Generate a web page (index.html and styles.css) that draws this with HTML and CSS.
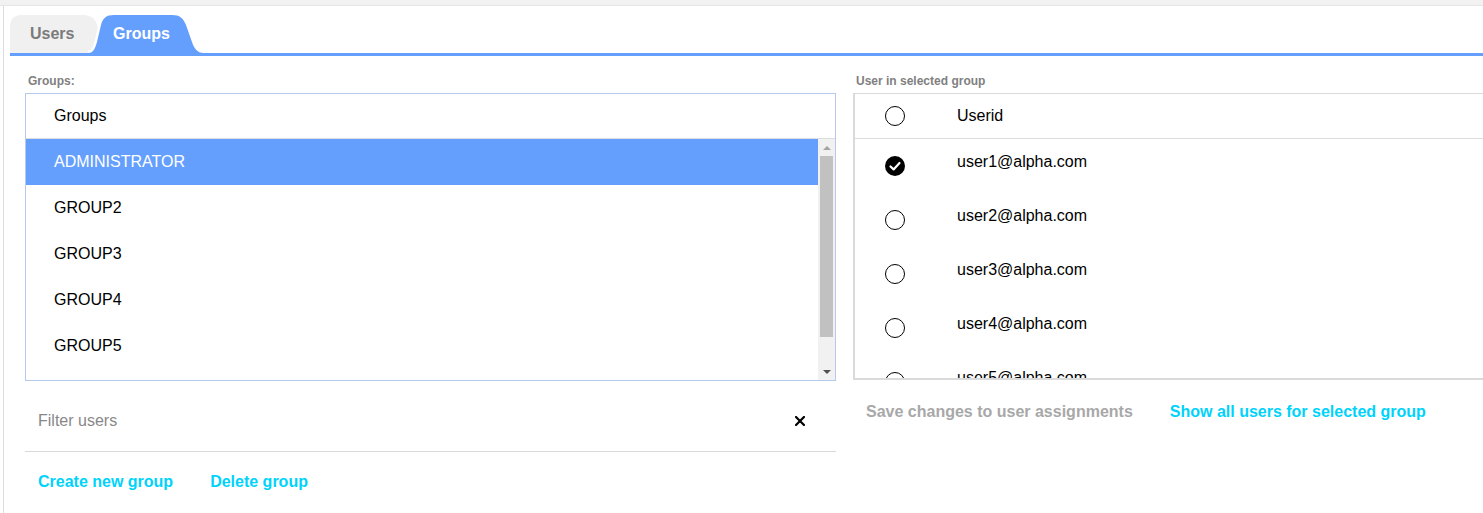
FILE: index.html
```html
<!DOCTYPE html>
<html>
<head>
<meta charset="utf-8">
<link rel="stylesheet" href="styles.css">
</head>
<body>
<div class="topbar"></div>
<div class="page">
  <div class="tabs">
    <div class="tab tab-users">
      <svg class="tab-shape" width="92" height="38" viewBox="0 0 92 38"><path d="M0,38 V12 Q0,0 12,0 H74 Q84,0 87,10 L92,38 Z" fill="#f0f0f0"/></svg>
      <span class="tab-label">Users</span>
    </div>
    <div class="tab tab-groups">
      <svg class="tab-shape" width="122" height="38" viewBox="-3 0 122 38"><path d="M0,38 C6,38 7,33 9,27 L13,10 C15,3 18,0 26,0" fill="none" stroke="#ffffff" stroke-width="5"/><path d="M0,38 C6,38 7,33 9,27 L13,10 C15,3 18,0 26,0 H84 C92,0 95,3 98,10 L104,27 C106,33 109,38 116,38 Z" fill="#659ffe"/></svg>
      <span class="tab-label">Groups</span>
    </div>
  </div>

  <div class="content">
    <div class="col col-left">
      <div class="label">Groups:</div>
      <div class="listbox">
        <div class="list-header">Groups</div>
        <div class="list-body">
          <div class="rows">
            <div class="row selected">ADMINISTRATOR</div>
            <div class="row">GROUP2</div>
            <div class="row">GROUP3</div>
            <div class="row">GROUP4</div>
            <div class="row">GROUP5</div>
            <div class="row">GROUP6</div>
          </div>
          <div class="scrollbar">
            <div class="sb-btn"><span class="arrow-up"></span></div>
            <div class="sb-track"><div class="sb-thumb"></div></div>
            <div class="sb-btn"><span class="arrow-down"></span></div>
          </div>
        </div>
      </div>
      <div class="filter">
        <span class="placeholder">Filter users</span>
        <svg class="clear" width="10" height="10" viewBox="0 0 10 10"><path d="M1,1 L9,9 M9,1 L1,9" stroke="#000" stroke-width="2.2" stroke-linecap="square"/></svg>
      </div>
      <div class="actions">
        <span class="link">Create new group</span>
        <span class="link">Delete group</span>
      </div>
    </div>

    <div class="col col-right">
      <div class="label">User in selected group</div>
      <div class="userbox">
        <div class="user-header">
          <span class="radio"></span>
          <span class="user-text">Userid</span>
        </div>
        <div class="user-body">
          <div class="user-row">
            <span class="radio checked"><svg width="20" height="20" viewBox="0 0 20 20"><circle cx="10" cy="10" r="10" fill="#000"/><path d="M5.5,10.5 L8.6,13.4 L14.5,7" fill="none" stroke="#fff" stroke-width="2.2" stroke-linecap="round" stroke-linejoin="round"/></svg></span>
            <span class="user-text">user1@alpha.com</span>
          </div>
          <div class="user-row">
            <span class="radio"></span>
            <span class="user-text">user2@alpha.com</span>
          </div>
          <div class="user-row">
            <span class="radio"></span>
            <span class="user-text">user3@alpha.com</span>
          </div>
          <div class="user-row">
            <span class="radio"></span>
            <span class="user-text">user4@alpha.com</span>
          </div>
          <div class="user-row">
            <span class="radio"></span>
            <span class="user-text">user5@alpha.com</span>
          </div>
        </div>
      </div>
      <div class="actions actions-right">
        <span class="link disabled">Save changes to user assignments</span>
        <span class="link">Show all users for selected group</span>
      </div>
    </div>
  </div>
</div>
</body>
</html>
```

FILE: styles.css
```css
html, body {
  margin: 0;
  padding: 0;
  background: #ffffff;
  width: 1483px;
  height: 513px;
  overflow: hidden;
  font-family: "Liberation Sans", Arial, sans-serif;
  color: #000;
}

.topbar {
  height: 5px;
  background: #f2f2f2;
  border-bottom: 1px solid #e6e6e6;
}

.page {
  margin-left: 3px;
  border-left: 1px solid #dedede;
  height: 507px;
  padding-top: 9px;
  box-sizing: border-box;
}

.tabs {
  margin-left: 6px;
  height: 38px;
  border-bottom: 3px solid #659ffe;
  display: flex;
  align-items: stretch;
}

.tab {
  position: relative;
  height: 38px;
  display: flex;
  align-items: center;
  font-weight: bold;
  font-size: 16px;
}

.tab-shape {
  position: absolute;
  left: 0;
  top: 0;
}

.tab-label {
  position: relative;
}

.tab-users {
  width: 92px;
  padding-left: 20px;
  box-sizing: border-box;
  color: #7b7b7b;
}

.tab-groups {
  width: 122px;
  margin-left: -17px;
  padding-left: 28px;
  box-sizing: border-box;
  color: #ffffff;
}

.content {
  display: flex;
  gap: 17px;
  padding-left: 21px;
  padding-top: 19px;
}

.col-left {
  width: 811px;
  flex: none;
}

.col-right {
  width: 680px;
  flex: none;
}

.label {
  font-size: 12px;
  font-weight: bold;
  color: #808080;
  line-height: 13px;
  height: 13px;
  margin-bottom: 5px;
  padding-left: 3px;
}

.listbox {
  border: 1px solid #b5c8ee;
}

.list-header {
  height: 44px;
  border-bottom: 1px solid #dddddd;
  display: flex;
  align-items: center;
  padding-left: 28px;
  font-size: 16px;
}

.list-body {
  height: 241px;
  display: flex;
  overflow: hidden;
}

.rows {
  flex: 1;
}

.row {
  height: 46px;
  display: flex;
  align-items: center;
  padding-left: 28px;
  font-size: 16px;
}

.row.selected {
  background: #659ffe;
  color: #ffffff;
}

.scrollbar {
  width: 17px;
  flex: none;
  background: #f1f1f1;
  display: flex;
  flex-direction: column;
}

.sb-btn {
  height: 17px;
  display: flex;
  align-items: center;
  justify-content: center;
  flex: none;
}

.arrow-up {
  width: 0;
  height: 0;
  border-left: 4px solid transparent;
  border-right: 4px solid transparent;
  border-bottom: 4px solid #a3a3a3;
}

.arrow-down {
  width: 0;
  height: 0;
  border-left: 4px solid transparent;
  border-right: 4px solid transparent;
  border-top: 4px solid #505050;
}

.sb-track {
  flex: 1;
  padding: 0 2px;
}

.sb-thumb {
  height: 181px;
  background: #c1c1c1;
}

.filter {
  height: 71px;
  padding-top: 9px;
  box-sizing: border-box;
  border-bottom: 1px solid #d9d9d9;
  display: flex;
  align-items: center;
  justify-content: space-between;
  padding-left: 13px;
  padding-right: 31px;
}

.placeholder {
  font-size: 16px;
  color: #888888;
}

.actions {
  display: flex;
  gap: 37px;
  padding-left: 13px;
  margin-top: 21px;
  line-height: 18px;
}

.actions-right {
  margin-top: 23px;
  gap: 37px;
}

.link {
  font-size: 16px;
  font-weight: bold;
  color: #00d3fb;
}

.link.disabled {
  color: #a8a8a8;
}

.userbox {
  border: 2px solid #dadada;
  border-top-width: 1px;
  border-right: none;
  height: 287px;
  box-sizing: border-box;
  overflow: hidden;
}

.user-header {
  height: 44px;
  border-bottom: 1px solid #dddddd;
  display: flex;
  align-items: center;
  padding-left: 30px;
  gap: 52px;
}

.user-body {
  height: 240px;
  overflow: hidden;
}

.user-row {
  height: 54px;
  display: flex;
  align-items: flex-start;
  padding-left: 30px;
  gap: 52px;
}

.user-row .radio {
  margin-top: 17px;
}

.user-row .user-text {
  padding-top: 14px;
}

.radio {
  width: 20px;
  height: 20px;
  box-sizing: border-box;
  border: 1.5px solid #000;
  border-radius: 50%;
  flex: none;
  display: block;
}

.radio.checked {
  border: none;
}

.radio.checked svg {
  display: block;
}

.user-text {
  font-size: 16px;
  line-height: 18px;
}
```
